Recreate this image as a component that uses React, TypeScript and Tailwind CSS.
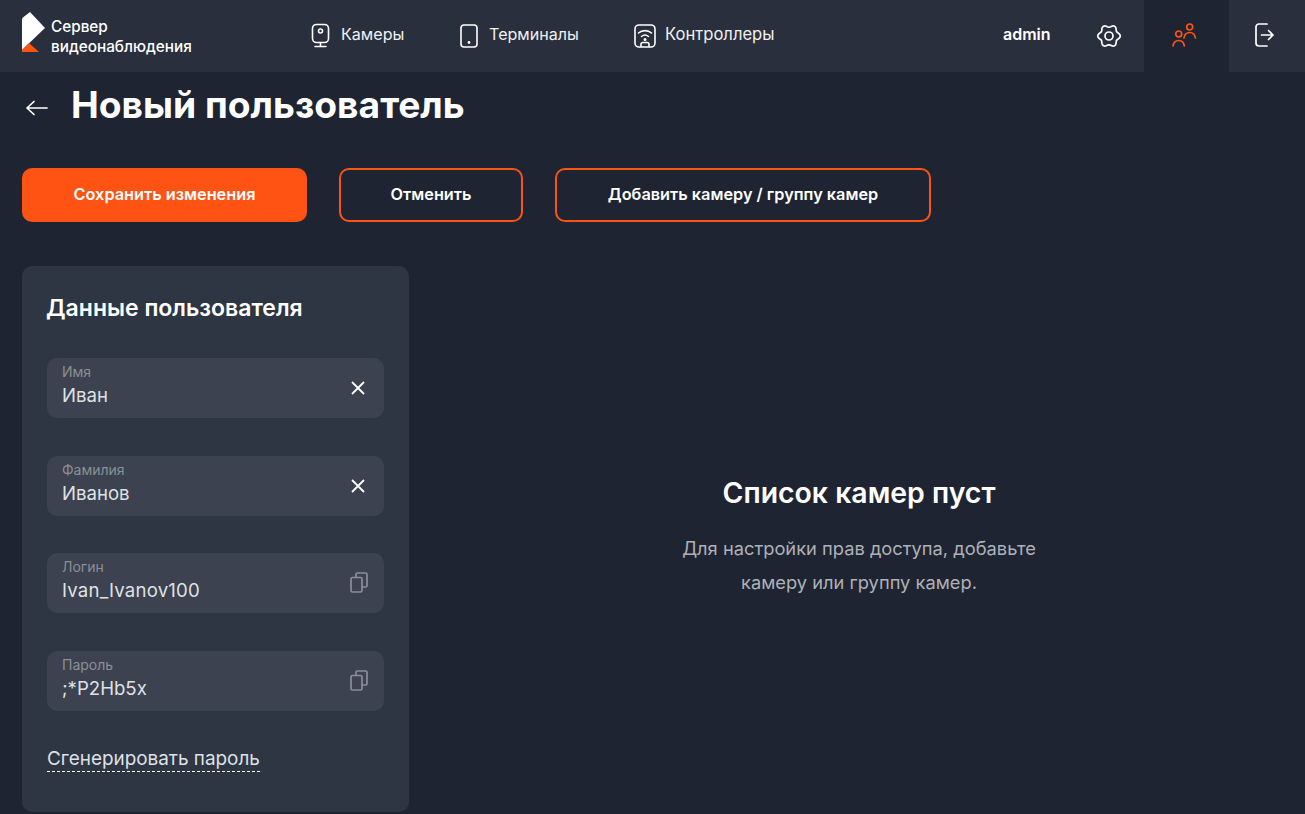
import React from "react";

const font = { fontFamily: "Inter, 'Noto Sans', sans-serif" };

const gearPath =
  Array.from({ length: 73 }, (_, i) => {
    const t = (i / 72) * Math.PI * 2;
    const r = 10 + 1.25 * Math.cos(6 * t);
    return `${i === 0 ? "M" : "L"}${(12 + r * Math.cos(t)).toFixed(2)} ${(12 + r * Math.sin(t)).toFixed(2)}`;
  }).join(" ") + "Z";

function Logo() {
  return (
    <svg width="24" height="40" viewBox="0 0 24 40" className="shrink-0 -mt-[8px]">
      <path d="M0 8 Q0 6 1.500 5 L8 0 L23 16 L0 38 Z" fill="#ffffff" />
      <path d="M0 40 L0 38 L7 31 L17 40 Z" fill="#ff5314" />
    </svg>
  );
}

function CameraIcon() {
  return (
    <svg width="20" height="26" viewBox="0 0 20 26" fill="none" stroke="#fff" strokeWidth="1.6" strokeLinecap="round">
      <rect x="1.500" y="1.500" width="16" height="18" rx="4" />
      <circle cx="9.500" cy="8" r="2" />
      <path d="M9.500 20v3M4 23.500h11" />
    </svg>
  );
}

function TabletIcon() {
  return (
    <svg width="18" height="24" viewBox="0 0 18 24" fill="none" stroke="#fff" strokeWidth="1.6">
      <rect x="1" y="1" width="16" height="22" rx="3" />
      <circle cx="9" cy="18.500" r="0.6" fill="#fff" />
    </svg>
  );
}

function ControllerIcon() {
  return (
    <svg width="22" height="24" viewBox="0 0 22 24" fill="none" stroke="#fff" strokeWidth="1.6" strokeLinecap="round">
      <rect x="1" y="1" width="20" height="22" rx="4" />
      <path d="M4.500 9c3.500-3.200 9.500-3.200 13 0M7.500 12.500c2-1.700 5-1.700 7 0" />
      <circle cx="11" cy="15.500" r="0.7" fill="#fff" />
      <path d="M7 22.500v-2a2 2 0 0 1 2-2h4a2 2 0 0 1 2 2v2" />
    </svg>
  );
}

function GearIcon() {
  return (
    <svg width="24" height="24" viewBox="0 0 24 24" fill="none" stroke="#fff" strokeWidth="1.7" strokeLinejoin="round">
      <path d={gearPath} />
      <circle cx="12" cy="12" r="4" />
    </svg>
  );
}

function UsersIcon() {
  return (
    <svg width="26" height="24" viewBox="0 0 26 24" fill="none" stroke="#ff5314" strokeWidth="1.7" strokeLinecap="round">
      <circle cx="6.700" cy="11" r="3" />
      <path d="M1 23c.6-3.600 2.800-5.500 5.700-5.500s5.100 1.900 5.700 5.500" />
      <circle cx="17.700" cy="4" r="3" />
      <path d="M12 15c.5-3.500 2.800-5.500 5.700-5.500s5.200 2 5.700 5.500" />
    </svg>
  );
}

function LogoutIcon() {
  return (
    <svg width="20" height="24" viewBox="0 0 20 24" fill="none" stroke="#fff" strokeWidth="1.7" strokeLinecap="round" strokeLinejoin="round">
      <path d="M12 1H4a3 3 0 0 0-3 3v16a3 3 0 0 0 3 3h8" />
      <path d="M6.500 12h11.500M13.500 7.500l4.500 4.500-4.500 4.500" />
    </svg>
  );
}

function CloseIcon() {
  return (
    <svg width="14" height="14" viewBox="0 0 14 14" fill="none" stroke="#fff" strokeWidth="1.8">
      <path d="M1 1l12 12M13 1L1 13" />
    </svg>
  );
}

function CopyIcon() {
  return (
    <svg width="18" height="21" viewBox="0 0 18 21" fill="none" stroke="#8a8f99" strokeWidth="1.7" strokeLinejoin="round">
      <rect x="1" y="5.500" width="11" height="14.500" rx="1.500" />
      <path d="M6 5.500V2.500A1.500 1.500 0 0 1 7.500 1h8A1.500 1.500 0 0 1 17 2.500v11a1.500 1.500 0 0 1-1.500 1.500H12" />
    </svg>
  );
}

function Field({ label, value, icon, mt, pr, valueClass = "" }: { label: string; value: string; icon: React.ReactNode; mt: string; pr: string; valueClass?: string }) {
  return (
    <div className={`h-[60px] rounded-[10px] bg-[#3c424f] pl-[15px] flex items-center justify-between ${pr} ${mt}`}>
      <div className="flex flex-col -mt-[3px]">
        <span className="text-[14px] leading-[16px] text-[#8b8f98]">{label}</span>
        <span className={`text-[18.600px] leading-[28px] text-[#dfe1e5] mt-[1px] ${valueClass}`}>{value}</span>
      </div>
      <div className="-mt-[1px] flex">{icon}</div>
    </div>
  );
}

export default function App() {
  return (
    <div style={font} className="w-[1305px] h-[814px] overflow-hidden bg-[#1e2431] text-white">
      <header className="h-[72px] bg-[#292f3d] flex items-stretch">
        <div className="ml-[22px] w-[289px] flex items-center gap-[5px]">
          <Logo />
          <div className="text-[15.300px] leading-[20px] font-medium mt-[1px]">
            <div>Сервер</div>
            <div>видеонаблюдения</div>
          </div>
        </div>
        <nav className="flex items-center text-[16.100px] w-[692px] text-[#f0f1f3]">
          <div className="flex items-center gap-[10px] w-[149px]"><CameraIcon /><span className="-mt-[4px]">Камеры</span></div>
          <div className="flex items-center gap-[11px] w-[174px]"><TabletIcon /><span className="-mt-[4px]">Терминалы</span></div>
          <div className="flex items-center gap-[9px]"><ControllerIcon /><span className="-mt-[4px] text-[16.600px]">Контроллеры</span></div>
        </nav>
        <div className="flex items-center text-[16px] font-semibold w-[94px]"><span className="-mt-[4px]">admin</span></div>
        <div className="flex items-center w-[47px] -mt-[1px]"><GearIcon /></div>
        <div className="w-[85px] bg-[#1e2431] flex items-center justify-center pr-[4px] pb-[2px]"><UsersIcon /></div>
        <div className="w-[76px] flex items-center justify-center pr-[4px] pb-[2px]"><LogoutIcon /></div>
      </header>

      <main className="px-[22px]">
        <div className="h-[66px] flex items-center gap-[22px]">
          <svg width="24" height="16" viewBox="0 0 24 16" fill="none" stroke="#fff" strokeWidth="1.7" strokeLinecap="round" strokeLinejoin="round" className="ml-[3px] mt-[6px]">
            <path d="M22 8H2M9 1.500L2 8l7 6.500" />
          </svg>
          <h1 className="text-[37.200px] font-bold leading-[44px]">Новый пользователь</h1>
        </div>

        <div className="mt-[30px] flex gap-[32px] text-[16.300px] font-semibold">
          <button className="w-[285px] h-[54px] rounded-[10px] bg-[#ff5314] pb-[2px]">Сохранить изменения</button>
          <button className="w-[184px] h-[54px] rounded-[10px] border-2 border-[#ff5314] pb-[2px]">Отменить</button>
          <button className="w-[376px] h-[54px] rounded-[10px] border-2 border-[#ff5314] pb-[2px]">Добавить камеру / группу камер</button>
        </div>

        <div className="mt-[44px] flex">
          <section className="w-[387px] h-[546px] rounded-[10px] bg-[#2e3543] px-[25px] pt-[26px]">
            <h2 className="text-[23px] leading-[32px] font-semibold -ml-px">Данные пользователя</h2>
            <Field pr="pr-[19px]" mt="mt-[34px]" label="Имя" value="Иван" icon={<CloseIcon />} />
            <Field pr="pr-[19px]" mt="mt-[38px]" label="Фамилия" value="Иванов" icon={<CloseIcon />} />
            <Field pr="pr-[16px]" mt="mt-[37px]" label="Логин" value="Ivan_Ivanov100" valueClass="tracking-[0.2px]" icon={<CopyIcon />} />
            <Field pr="pr-[16px]" mt="mt-[38px]" label="Пароль" value=";*P2Hb5x" icon={<CopyIcon />} />
            <div className="mt-[35px]">
              <span className="inline-block text-[18.900px] leading-[25px] text-[#dfe1e5] border-b border-dashed border-white">Сгенерировать пароль</span>
            </div>
          </section>

          <section className="flex-1 pt-[208px] flex flex-col items-center pl-[26px]">
            <h3 className="text-[28.400px] leading-[38px] font-semibold">Список камер пуст</h3>
            <p className="mt-[19px] text-[18.300px] leading-[34px] text-[#aeb1b8] text-center">
              Для настройки прав доступа, добавьте<br />камеру или группу камер.
            </p>
          </section>
        </div>
      </main>
    </div>
  );
}
